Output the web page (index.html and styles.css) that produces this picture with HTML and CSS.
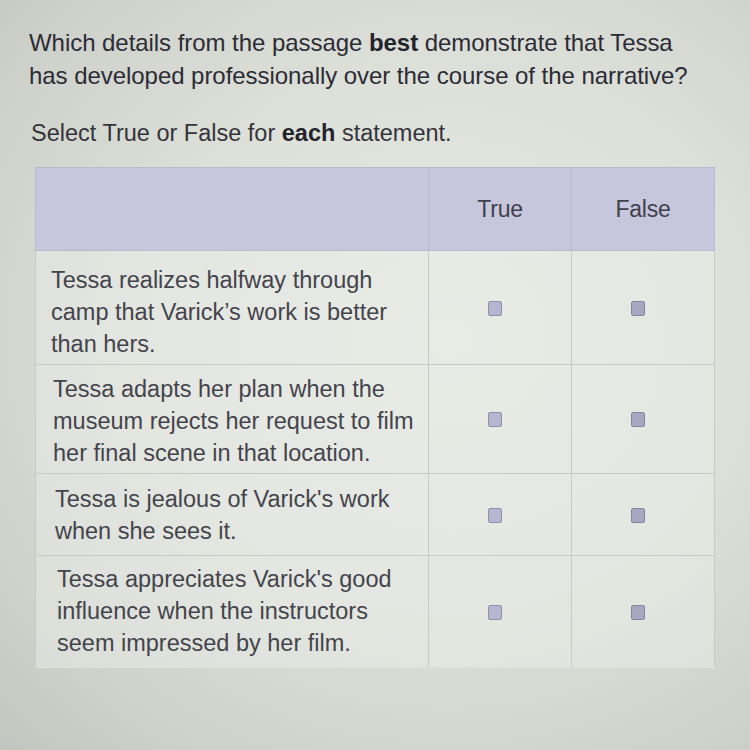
FILE: index.html
```html
<!DOCTYPE html>
<html>
<head>
<meta charset="utf-8">
<link rel="stylesheet" href="styles.css">
</head>
<body>
<div class="page">
  <p class="question">Which details from the passage <b>best</b> demonstrate that Tessa<br>has developed professionally over the course of the narrative?</p>
  <p class="instr">Select True or False for <b>each</b> statement.</p>
  <table class="grid">
    <thead>
      <tr><th class="stmt"></th><th class="opt">True</th><th class="opt">False</th></tr>
    </thead>
    <tbody>
      <tr class="r1"><td class="stmt">Tessa realizes halfway through<br>camp that Varick’s work is better<br>than hers.</td><td class="opt"><span class="box"></span></td><td class="opt"><span class="box dark"></span></td></tr>
      <tr class="r2"><td class="stmt">Tessa adapts her plan when the<br>museum rejects her request to film<br>her final scene in that location.</td><td class="opt"><span class="box"></span></td><td class="opt"><span class="box dark"></span></td></tr>
      <tr class="r3"><td class="stmt">Tessa is jealous of Varick's work<br>when she sees it.</td><td class="opt"><span class="box"></span></td><td class="opt"><span class="box dark"></span></td></tr>
      <tr class="r4 last"><td class="stmt">Tessa appreciates Varick's good<br>influence when the instructors<br>seem impressed by her film.</td><td class="opt"><span class="box"></span></td><td class="opt"><span class="box dark"></span></td></tr>
    </tbody>
  </table>
</div>
</body>
</html>
```
FILE: styles.css
```css
html, body {
  margin: 0;
  padding: 0;
  width: 750px;
  height: 750px;
  overflow: hidden;
}
body {
  font-family: "Liberation Sans", Arial, sans-serif;
  background: radial-gradient(ellipse at 60% 45%, #e5e7e1 0%, #dee0da 45%, #cfd1cb 80%, #c3c5c0 100%);
  color: #2f2f38;
}
.page {
  padding: 26px 0 0 29px;
}
.question {
  margin: 0;
  white-space: nowrap;
  font-size: 24px;
  line-height: 33px;
  color: #2c2c36;
  letter-spacing: -0.05px;
}
.question b, .instr b {
  font-weight: bold;
  color: #23232c;
}
.instr {
  margin: 26px 0 0 2px;
  white-space: nowrap;
  font-size: 23.5px;
  line-height: 30px;
  color: #34343c;
  letter-spacing: 0;
}
.grid {
  margin: 19px 0 0 6px;
  border-collapse: collapse;
  width: 678px;
  table-layout: fixed;
}
.grid th, .grid td {
  border: 1px solid #c9cac8;
  padding: 0;
}
.grid thead th {
  background: #c6c7dc;
  height: 82px;
  font-weight: normal;
  font-size: 23px;
  color: #40404c;
  border-color: #b9bacd;
  letter-spacing: -0.2px;
}
.grid th.stmt, .grid td.stmt { width: 392px; }
.grid th.opt, .grid td.opt { width: 142px; text-align: center; }
.grid td {
  background: rgba(238, 240, 234, 0.45);
}
.grid td.stmt {
  white-space: nowrap;
  font-size: 23.5px;
  line-height: 32px;
  color: #44444c;
  vertical-align: top;
  letter-spacing: 0;
}
.grid tr.r1 td.stmt { padding: 13px 0 4px 15px; }
.grid tr.r2 td.stmt { padding: 8px 0 4px 17px; }
.grid tr.r3 td.stmt { padding: 9px 0 8px 19px; }
.grid tr.r4 td.stmt { padding: 7px 0 8px 21px; }
.grid tr.last td { border-bottom-color: #dfe1dc; }
.grid td.opt {
  vertical-align: middle;
  padding-right: 10px;
}
.box {
  display: inline-block;
  width: 12px;
  height: 13px;
  border: 1px solid #8f90aa;
  border-radius: 2px;
  background: #b5b6cf;
  vertical-align: middle;
}
.box.dark {
  background: #a7a8bf;
  border-color: #85869d;
}
```
